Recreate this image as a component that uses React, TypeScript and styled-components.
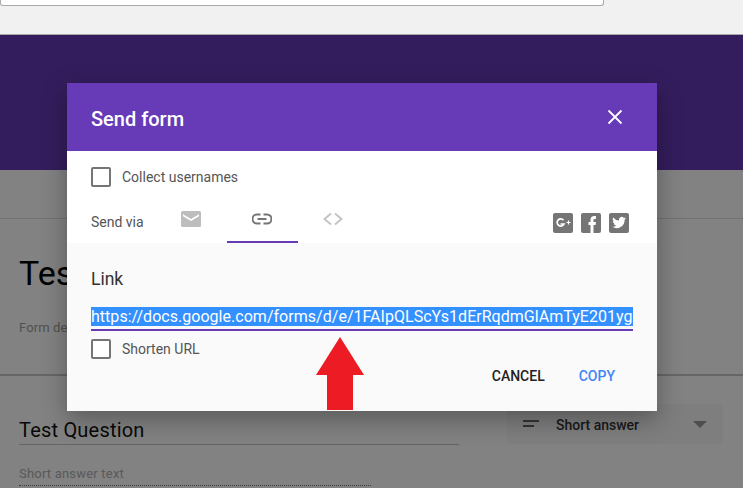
import React from 'react';
import styled, { createGlobalStyle } from 'styled-components';

const PURPLE = '#673ab7';
const BLUE = '#4285f4';
const ICON_GRAY = '#757575';
const FONT = 'Roboto, "Liberation Sans", sans-serif';

const GlobalStyle = createGlobalStyle`
    html, body {
        margin: 0;
        padding: 0;
        background: #fff;
        font-family: ${FONT};
        overflow: hidden;
    }
`;

const Page = styled.div`
    width: 743px;
    height: 488px;
    display: flex;
    flex-direction: column;
    overflow: hidden;
`;

const BrowserBar = styled.div`
    height: 34px;
    flex: 0 0 auto;
    background: #f1f1f1;
    border-bottom: 1px solid #a8a8a8;
`;

const AddressBox = styled.div`
    width: 604px;
    height: 6px;
    box-sizing: border-box;
    background: #fff;
    border: 1px solid #a9a9a9;
    border-top: 0;
    border-radius: 0 0 3px 3px;
`;

const FormArea = styled.div`
    position: relative;
    flex: 1 1 auto;
    display: flex;
    flex-direction: column;
`;

const Banner = styled.div`
    height: 135px;
    flex: 0 0 auto;
    background: ${PURPLE};
`;

const HeaderStrip = styled.div`
    height: 48px;
    flex: 0 0 auto;
    border-bottom: 1px solid #e0e0e0;
`;

const TitleCard = styled.div`
    height: 157px;
    flex: 0 0 auto;
    box-sizing: border-box;
    padding: 33px 19px 0;
    border-bottom: 2px solid #c8c8c8;
`;

const FormTitle = styled.div`
    font-size: 34px;
    line-height: 42px;
    color: #000;
`;

const FormDescription = styled.div`
    margin-top: 26px;
    font-size: 13px;
    line-height: 16px;
    letter-spacing: 0.1px;
    color: #a0a0a0;
`;

const QuestionRow = styled.div`
    display: flex;
    justify-content: space-between;
    padding: 28px 20px 0 19px;
`;

const QuestionColumn = styled.div`
    display: flex;
    flex-direction: column;
`;

const QuestionTitle = styled.div`
    width: 440px;
    height: 41px;
    box-sizing: border-box;
    padding-top: 14px;
    font-size: 20px;
    line-height: 24px;
    letter-spacing: 0.2px;
    color: #111;
    border-bottom: 1px solid #c4c4c4;
`;

const AnswerHint = styled.div`
    width: 352px;
    height: 41px;
    box-sizing: border-box;
    padding-top: 21px;
    font-size: 13px;
    line-height: 16px;
    letter-spacing: 0.2px;
    color: #b0b0b0;
    border-bottom: 1px dotted #777;
`;

const TypeSelect = styled.div`
    width: 216px;
    height: 40px;
    display: flex;
    align-items: center;
    box-sizing: border-box;
    padding: 0 16px;
    background: #f8f8f8;
    border-radius: 2px;
    font-size: 14px;
    font-weight: 500;
    color: #333;
`;

const TypeLabel = styled.span`
    flex: 1 1 auto;
    margin-left: 17px;
    padding-top: 2px;
`;

const Caret = styled.span`
    width: 0;
    height: 0;
    border-left: 7px solid transparent;
    border-right: 7px solid transparent;
    border-top: 7px solid #9a9a9a;
`;

const Scrim = styled.div`
    position: absolute;
    inset: 0;
    background: rgba(0, 0, 0, 0.49);
`;

const Dialog = styled.div`
    position: absolute;
    left: 67px;
    top: 48px;
    width: 590px;
    height: 328px;
    display: flex;
    flex-direction: column;
    background: #fafafa;
    box-shadow: 0 8px 24px rgba(0, 0, 0, 0.32);
`;

const DialogHeader = styled.div`
    height: 68px;
    flex: 0 0 auto;
    display: flex;
    align-items: center;
    justify-content: space-between;
    padding: 0 34px 0 24px;
    background: ${PURPLE};
`;

const DialogTitle = styled.div`
    padding-top: 4px;
    font-size: 20px;
    font-weight: 500;
    color: #fff;
`;

const CloseIcon = styled.svg`
    display: block;
    width: 16px;
    height: 16px;
`;

const SendOptions = styled.div`
    height: 92px;
    flex: 0 0 auto;
    box-sizing: border-box;
    padding: 16px 28px 0 24px;
    background: #fff;
`;

const CheckRow = styled.label`
    display: flex;
    align-items: center;
    height: 20px;
    gap: 11px;
    font-size: 14px;
    color: #555;
`;

const CheckBox = styled.span`
    width: 20px;
    height: 20px;
    box-sizing: border-box;
    border: 2px solid ${ICON_GRAY};
    border-radius: 2px;
    background: #fff;
`;

const SendRow = styled.div`
    height: 56px;
    display: flex;
    align-items: flex-start;
`;

const SendLabel = styled.div`
    width: 65px;
    padding-top: 27px;
    font-size: 14px;
    line-height: 16px;
    color: #555;
`;

const Tab = styled.div<{ $active?: boolean }>`
    width: 71px;
    height: 56px;
    box-sizing: border-box;
    display: flex;
    justify-content: center;
    padding: 24px 1px 0 0;
    border-bottom: 2px solid ${(p) => (p.$active ? PURPLE : 'transparent')};
`;

const SocialGroup = styled.div`
    margin-left: auto;
    padding-top: 26px;
    display: flex;
    gap: 8px;
`;

const IconSvg = styled.svg`
    display: block;
    width: 20px;
    height: 20px;
`;

const LinkPanel = styled.div`
    flex: 1 1 auto;
    display: flex;
    flex-direction: column;
    padding: 26px 24px 0;
`;

const LinkLabel = styled.div`
    font-size: 17.5px;
    line-height: 20px;
    color: #333;
`;

const LinkField = styled.div`
    margin-top: 18px;
    height: 24px;
    box-sizing: border-box;
    border-bottom: 2px solid ${PURPLE};
    overflow: hidden;
    white-space: nowrap;
    font-size: 16px;
    line-height: 19px;
    letter-spacing: 0.03px;
`;

const SelectedText = styled.span`
    display: inline-block;
    background: #3390ff;
    color: #fff;
`;

const ShortenRow = styled(CheckRow)`
    margin-top: 8px;
`;

const DialogActions = styled.div`
    display: flex;
    justify-content: flex-end;
    gap: 34px;
    margin-top: 9px;
    padding-right: 18px;
`;

const ActionButton = styled.div<{ $primary?: boolean }>`
    font-size: 14px;
    font-weight: 500;
    line-height: 16px;
    color: ${(p) => (p.$primary ? BLUE : '#222')};
`;

const RedArrow = styled.svg`
    position: absolute;
    left: 316px;
    top: 302px;
    width: 48px;
    height: 74px;
`;

export default function App() {
    return (
        <Page>
            <GlobalStyle />
            <BrowserBar>
                <AddressBox />
            </BrowserBar>
            <FormArea>
                <Banner />
                <HeaderStrip />
                <TitleCard>
                    <FormTitle>Test</FormTitle>
                    <FormDescription>Form description</FormDescription>
                </TitleCard>
                <QuestionRow>
                    <QuestionColumn>
                        <QuestionTitle>Test Question</QuestionTitle>
                        <AnswerHint>Short answer text</AnswerHint>
                    </QuestionColumn>
                    <TypeSelect>
                        <svg width="16" height="8" viewBox="0 0 16 8">
                            <path d="M0 0h16v2H0zM0 5h11v2H0z" fill="#666" />
                        </svg>
                        <TypeLabel>Short answer</TypeLabel>
                        <Caret />
                    </TypeSelect>
                </QuestionRow>
                <Scrim />
                <Dialog>
                    <DialogHeader>
                        <DialogTitle>Send form</DialogTitle>
                        <CloseIcon viewBox="0 0 16 16">
                            <path d="M1.5 1.500l13 13M14.500 1.500l-13 13" stroke="#fff" strokeWidth="1.800" fill="none" />
                        </CloseIcon>
                    </DialogHeader>
                    <SendOptions>
                        <CheckRow>
                            <CheckBox />
                            Collect usernames
                        </CheckRow>
                        <SendRow>
                            <SendLabel>Send via</SendLabel>
                            <Tab>
                                <IconSvg viewBox="0 0 20 20">
                                    <path
                                        fillRule="evenodd"
                                        d="M1.500 0h17A1.500 1.500 0 0 1 20 1.500v13a1.500 1.500 0 0 1-1.500 1.500h-17A1.500 1.500 0 0 1 0 14.500v-13A1.500 1.500 0 0 1 1.500 0zM2 3.200v2L10 10l8-4.800v-2L10 8z"
                                        fill="#bdbdbd"
                                    />
                                </IconSvg>
                            </Tab>
                            <Tab $active>
                                <IconSvg viewBox="0 0 20 20">
                                    <path
                                        d="M8.500 3.500H5a4.500 4.500 0 0 0 0 9h3.500M11.500 3.500H15a4.500 4.500 0 0 1 0 9h-3.500M5.500 8h9"
                                        stroke={ICON_GRAY}
                                        strokeWidth="2"
                                        fill="none"
                                    />
                                </IconSvg>
                            </Tab>
                            <Tab>
                                <IconSvg viewBox="0 0 20 20">
                                    <path
                                        d="M8 2.500L1.500 8 8 13.500M12 2.500L18.500 8 12 13.500"
                                        stroke="#c4c4c4"
                                        strokeWidth="2"
                                        fill="none"
                                    />
                                </IconSvg>
                            </Tab>
                            <SocialGroup>
                                <IconSvg viewBox="0 0 20 20">
                                    <rect width="20" height="20" rx="2" fill={ICON_GRAY} />
                                    <path
                                        d="M10.500 7.200A3.600 3.600 0 1 0 11 11H7.500"
                                        stroke="#fff"
                                        strokeWidth="1.700"
                                        fill="none"
                                    />
                                    <path d="M13.500 9.500h4M15.500 7.500v4" stroke="#fff" strokeWidth="1.100" />
                                </IconSvg>
                                <IconSvg viewBox="0 0 20 20">
                                    <rect width="20" height="20" rx="2" fill={ICON_GRAY} />
                                    <path
                                        d="M9.500 20v-8H7.500V9h2V6.800C9.500 4.300 11 3 13.200 3H15v3h-1.300c-1 0-1.200.5-1.200 1.200V9H15l-.4 3h-2.100v8z"
                                        fill="#fff"
                                    />
                                </IconSvg>
                                <IconSvg viewBox="0 0 20 20">
                                    <rect width="20" height="20" rx="2" fill={ICON_GRAY} />
                                    <path
                                        d="M17 5.300c-.5.200-1 .4-1.600.5.600-.4 1-.9 1.200-1.600-.5.300-1.100.6-1.800.7a2.800 2.800 0 0 0-4.800 2.600A8 8 0 0 1 4.200 4.500a2.800 2.800 0 0 0 .9 3.800c-.5 0-.9-.1-1.300-.4 0 1.400 1 2.500 2.300 2.800-.4.100-.8.100-1.300 0 .4 1.100 1.400 1.900 2.600 2a5.700 5.700 0 0 1-4.100 1.100 8 8 0 0 0 12.300-7.100c.600-.4 1-.9 1.400-1.400z"
                                        fill="#fff"
                                    />
                                </IconSvg>
                            </SocialGroup>
                        </SendRow>
                    </SendOptions>
                    <LinkPanel>
                        <LinkLabel>Link</LinkLabel>
                        <LinkField>
                            <SelectedText>
                                https://docs.google.com/forms/d/e/1FAIpQLScYs1dErRqdmGlAmTyE201ygLxkWq/viewform
                            </SelectedText>
                        </LinkField>
                        <ShortenRow>
                            <CheckBox />
                            Shorten URL
                        </ShortenRow>
                        <DialogActions>
                            <ActionButton>CANCEL</ActionButton>
                            <ActionButton $primary>COPY</ActionButton>
                        </DialogActions>
                    </LinkPanel>
                </Dialog>
                <RedArrow viewBox="0 0 48 74">
                    <path d="M24 0L48 38H37V73H11V38H0z" fill="#ed1c24" />
                </RedArrow>
            </FormArea>
        </Page>
    );
}
